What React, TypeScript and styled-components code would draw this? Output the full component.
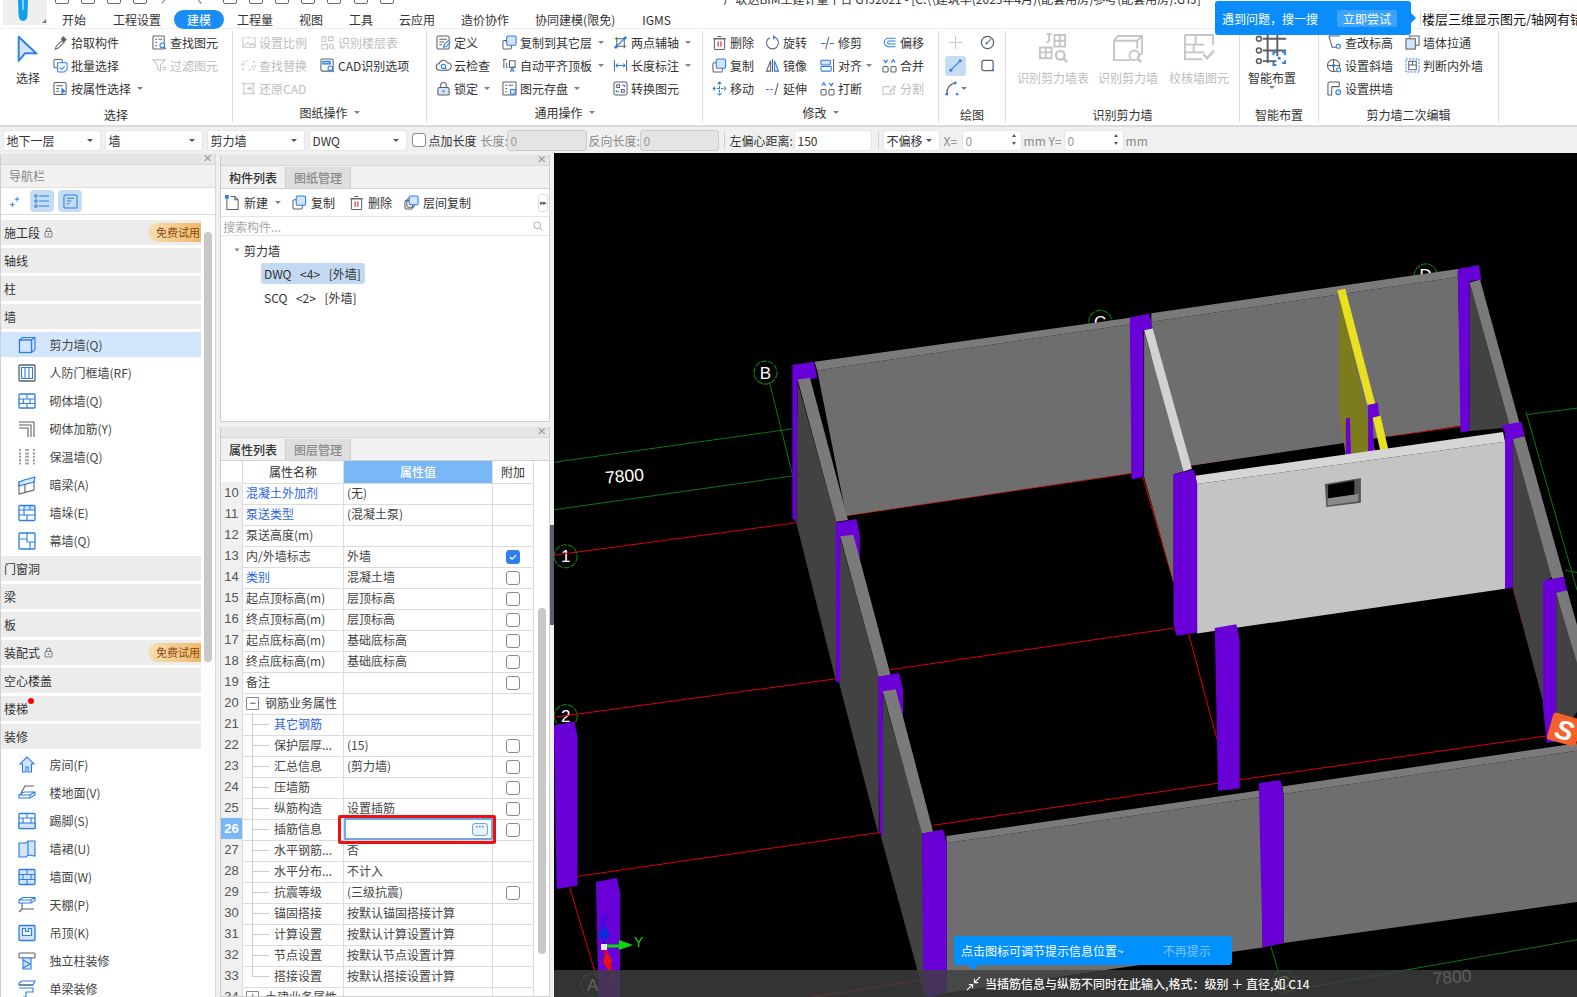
import React from 'react';
import styled, { createGlobalStyle } from 'styled-components';

const B = '#2b7de9';
const D = '#5a5f68';
const G = '#c6c6c6';
const F = '#d2e3fa';

const Global = createGlobalStyle`
  html, body { margin: 0; padding: 0; background: #f0f0f0; overflow: hidden; }
  * { box-sizing: border-box; }
  body { font-family: "Noto Sans CJK SC", "Liberation Sans", sans-serif; font-size: 12px; color: #333; }
`;

const Page = styled.div`
  width: 1577px; height: 997px; position: relative; overflow: hidden;
  display: flex; flex-direction: column; background: #f0f0f0;
`;

/* ---------- header ---------- */
const Header = styled.header`
  height: 29px; display: flex; background: #fff; flex: none; border-bottom: 1px solid #f0f0f0;
`;
const LogoBox = styled.div`
  width: 44px; height: 25px; margin-left: 3px; background: #efefef; position: relative; overflow: hidden; flex: none;
`;
const HeaderMain = styled.div`flex: 1; display: flex; flex-direction: column; min-width: 0;`;
const QuickRow = styled.div`
  height: 10px; overflow: hidden; display: flex; align-items: flex-start; flex: none;
`;
const QuickIcon = styled.span<{ $ml: number }>`
  display: block; flex: none; width: 14px; height: 14px; margin-top: -10px; margin-left: ${p => p.$ml}px;
  border: 1.2px solid #6a6a6a; border-radius: 2px;
`;
const QuickSlash = styled.span<{ $ml: number; $rot: number }>`
  display: block; flex: none; width: 1.2px; height: 12px; margin-top: -7px; margin-left: ${p => p.$ml}px;
  background: #777; transform: rotate(${p => p.$rot}deg);
`;
const TitleText = styled.span`
  margin-left: 329px; margin-top: -8px; line-height: 13px; white-space: nowrap; color: #333; flex: none; font-size: 12px;
`;
const TabBar = styled.nav`height: 19px; display: flex; align-items: center; flex: none;`;
const Tab = styled.span<{ $ml: number; $active?: boolean }>`
  margin-left: ${p => p.$ml}px; height: 19px; line-height: 19px; flex: none; white-space: nowrap;
  ${p => p.$active && `background:#1a8df5;color:#fff;border-radius:10px;width:50px;text-align:center;`}
`;

const HelpTip = styled.div`
  position: absolute; left: 1215px; top: 1px; width: 196px; height: 34px; background: #0a8dfb; border-radius: 3px; color: #fff;
  display: flex; align-items: center; padding-left: 7px; z-index: 5;
  &::after { content: ''; position: absolute; right: -5px; top: 12px; border-left: 5px solid #0a8dfb; border-top: 5px solid transparent; border-bottom: 5px solid transparent; }
`;
const HelpBtn = styled.span`
  margin-left: 19px; width: 60px; height: 17px; line-height: 17px; text-align: center; background: rgba(255,255,255,.2); border-radius: 2px;
`;
const TopSearch = styled.div`
  position: absolute; left: 1420px; top: 10px; width: 170px; height: 16px; line-height: 16px; padding-left: 1px;
  background: #fff; white-space: nowrap; overflow: hidden; color: #111; font-size: 13px; border-left: 1px solid #ddd; border-top: 1px solid #eee; z-index: 5;
`;

/* ---------- ribbon ---------- */
const Ribbon = styled.div`
  height: 98px; background: #fff; display: flex; flex: none; border-bottom: 2px solid #dcdcdc;
`;
const Group = styled.section<{ $w: number }>`
  width: ${p => p.$w}px; height: 91px; margin-top: 2px; flex: none; display: flex; flex-direction: column;
  border-right: 1px solid #dedede;
`;
const GroupBody = styled.div<{ $pl?: number }>`height: 72px; display: flex; padding-left: ${p => p.$pl || 0}px; flex: none;`;
const GroupLabel = styled.div<{ $plain?: boolean }>`
  height: 19px; line-height: 17px; display: flex; justify-content: center; align-items: center; gap: 6px;
  padding-top: ${p => (p.$plain ? 4 : 0)}px;
`;
const Caret = styled.i<{ $ml?: number; $c?: string }>`
  display: inline-block; flex: none; margin-left: ${p => p.$ml ?? 4}px; width: 0; height: 0; border-left: 3px solid transparent; border-right: 3px solid transparent; border-top: 3.5px solid ${p => p.$c || '#808080'};
`;
const ToolGrid = styled.div<{ $cols: string }>`
  display: grid; grid-template-columns: ${p => p.$cols}; grid-auto-rows: 23px; align-items: center;
`;
const Tool = styled.div<{ $off?: boolean }>`
  display: flex; align-items: center; white-space: nowrap; color: ${p => (p.$off ? '#bdbdbd' : '#333')};
`;
const ToolIcon = styled.span`width: 18px; flex: none; display: flex; align-items: center;`;
const BigTool = styled.div<{ $w: number; $off?: boolean; $pl?: number }>`
  width: ${p => p.$w}px; flex: none; display: flex; flex-direction: column; align-items: center; padding-top: 2px; padding-left: ${p => p.$pl || 0}px;
  white-space: nowrap; color: ${p => (p.$off ? '#bdbdbd' : '#333')};
`;
const BigIcon = styled.span`height: 32px; display: flex; align-items: flex-start; justify-content: center;`;
const BigLabel = styled.span`margin-top: 5px; line-height: 16px;`;
const DrawCell = styled.div<{ $on?: boolean }>`
  width: 21px; height: 20px; margin: 0 auto; display: flex; align-items: center; justify-content: center; border-radius: 3px; position: relative;
  background: ${p => (p.$on ? '#c5dcf3' : 'transparent')};
`;
const IconSvg = styled.svg<{ $s: number }>`
  width: ${p => p.$s}px; height: ${p => p.$s}px; display: block; flex: none; overflow: visible; fill: none; stroke-width: 1.1;
`;

/* ---------- option bar ---------- */
const OptionBar = styled.div`
  height: 26px; display: flex; align-items: center; flex: none; padding-left: 2.5px; background: #f0f0f0;
`;
const Select = styled.div<{ $w: number; $ml?: number }>`
  width: ${p => p.$w}px; height: 21px; margin-left: ${p => p.$ml || 0}px; background: #fff; border: 1px solid #e6e6e6; border-radius: 3px; flex: none;
  display: flex; align-items: center; justify-content: space-between; padding: 0 7px 0 3px; font-size: 12px;
`;
const OptCheck = styled.span`
  width: 14px; height: 14px; background: #fff; border: 1px solid #8a8a8a; border-radius: 3px; margin-left: 4.5px; margin-right: 3px; flex: none;
`;
const OptText = styled.span<{ $ml?: number; $w?: number; $grey?: boolean }>`
  margin-left: ${p => p.$ml || 0}px; ${p => p.$w && `width:${p.$w}px;`} flex: none; white-space: nowrap; color: ${p => (p.$grey ? '#8a8a8a' : '#333')};
`;
const OptInput = styled.div<{ $w: number; $off?: boolean; $ml?: number }>`
  width: ${p => p.$w}px; height: 21px; margin-left: ${p => p.$ml || 0}px; flex: none; padding-left: 3px; line-height: 19px; border-radius: 3px;
  border: 1px solid ${p => (p.$off ? '#ccc' : '#e6e6e6')}; background: ${p => (p.$off ? '#e4e4e4' : '#fff')}; color: ${p => (p.$off ? '#999' : '#333')};
  position: relative;
`;
const SpinValue = styled.span`color: #999;`;
const Spin = styled.span`
  position: absolute; right: 5px; top: 3px; display: flex; flex-direction: column; gap: 5px;
  i { display: block; width: 0; height: 0; border-left: 2.5px solid transparent; border-right: 2.5px solid transparent; }
  i:first-child { border-bottom: 3px solid #555; }
  i:last-child { border-top: 3px solid #555; }
`;
const OptSep = styled.span<{ $ml: number }>`width: 1px; height: 17px; background: #d0d0d0; margin-left: ${p => p.$ml}px; flex: none;`;

/* ---------- main ---------- */
const Main = styled.main`flex: 1; display: flex; min-height: 0; overflow: hidden;`;
const NavPanel = styled.aside`
  width: 216px; margin-top: 1px; flex: none; background: #fff; border-left: 1px solid #cfcfcf; border-right: 1px solid #d8d8d8; position: relative; overflow: hidden;
  display: flex; flex-direction: column;
`;
const PanelClose = styled.div`
  height: 11px; background: #e6e6e6; border-bottom: 1px solid #d8d8d8; flex: none; position: relative;
  &::after { content: '×'; position: absolute; right: 3px; top: -4px; font: 15px/15px "Liberation Sans", sans-serif; color: #999; }
`;
const NavTitle = styled.div`height: 23px; background: #f1f1f1; border-bottom: 1px solid #ddd; line-height: 22px; padding-left: 8px; color: #888; flex: none;`;
const NavTools = styled.div`height: 27px; border-bottom: 1px solid #ddd; display: flex; align-items: center; flex: none; padding-left: 8px;`;
const NavToolBtn = styled.span<{ $ml: number; $on?: boolean }>`
  margin-left: ${p => p.$ml}px; width: ${p => (p.$on ? 24 : 12)}px; height: 22px; border-radius: 4px; display: flex; align-items: center; justify-content: center;
  background: ${p => (p.$on ? '#c5dcf3' : 'transparent')};
`;
const NavList = styled.div`padding-top: 5px; width: 200px; flex: none;`;
const NavHead = styled.div`
  height: 25px; margin-bottom: 3px; background: #ececec; display: flex; align-items: center; gap: 3px; padding-left: 3px; position: relative;
`;
const FreeBadge = styled.span`
  position: absolute; right: 0; top: 3px; width: 53px; height: 19px; line-height: 19px; padding-left: 8px; border-radius: 10px 0 0 10px;
  background: linear-gradient(90deg, #f6dfb5, #efb868); color: #8a4c12; font-size: 11px; white-space: nowrap; overflow: hidden;
`;
const RedDot = styled.span`
  position: absolute; left: 27px; top: 2px; width: 6px; height: 6px; border-radius: 50%; background: #f00;
`;
const NavItem = styled.div<{ $on?: boolean }>`
  height: 25px; margin-bottom: 3px; display: flex; align-items: center; padding-left: 16.5px; gap: 14px; color: #444;
  background: ${p => (p.$on ? '#d2e6fd' : 'transparent')};
`;
const NavScroll = styled.div`
  position: absolute; left: 203px; top: 78px; width: 8px; height: 430px; border-radius: 4px; background: #c8c8c8;
`;

const MidCol = styled.div`
  width: 330px; margin-left: 4px; padding-top: 2px; flex: none; display: flex; flex-direction: column; gap: 5px; overflow: hidden;
`;
const Panel = styled.section<{ $h?: number }>`
  ${p => (p.$h ? `height:${p.$h}px;` : 'flex:1;')} background: #fff; border-left: 1px solid #cfcfcf; border-right: 1px solid #cfcfcf; border-bottom: 1px solid #cfcfcf; position: relative; overflow: hidden; flex-shrink: 0;
`;
const TabRow = styled.div`height: 23px; display: flex; background: #f1f1f1; border-bottom: 1px solid #cfcfcf;`;
const PanelTab = styled.span<{ $on?: boolean }>`
  width: 65px; text-align: center; line-height: 21px; font-weight: 500; border-right: 1px solid #cfcfcf; margin-top: 1px;
  background: ${p => (p.$on ? '#f1f1f1' : '#dedede')}; color: ${p => (p.$on ? '#333' : '#8a8a8a')};
`;
const CompBar = styled.div`height: 28px; display: flex; align-items: center; border-bottom: 1px solid #e4e4e4; padding-left: 4px; position: relative;`;
const CompTool = styled.span<{ $w: number }>`width: ${p => p.$w}px; display: flex; align-items: center; gap: 4px; flex: none;`;
const MoreBtn = styled.span`
  position: absolute; right: 1px; top: 5px; width: 10px; height: 18px; border: 1px solid #e0e0e0; border-radius: 2px; font: 7px/16px "Liberation Sans", sans-serif; color: #555; text-align: center; letter-spacing: -1px;
`;
const SearchRow = styled.div`
  height: 19px; border-bottom: 1px solid #e4e4e4; display: flex; align-items: center; justify-content: space-between; color: #a8a8a8; padding: 0 5px 0 2px;
`;
const Tree = styled.div`padding-top: 4px;`;
const TreeHead = styled.div`height: 20px; display: flex; align-items: center; padding-left: 12px; gap: 3px;`;
const TreeLeaf = styled.div<{ $on?: boolean }>`
  margin: 3px 0 0 40px; width: fit-content; height: 21px; line-height: 21px; padding: 0 4px 0 3px; border-radius: 3px; white-space: pre; word-spacing: 1.6px;
  background: ${p => (p.$on ? '#c2d9f1' : 'transparent')};
  &:first-of-type { margin-top: 4px; }
`;

const HeadRow = styled.div`display: grid; grid-template-columns: 22px 101px 149px 41px; height: 21px; text-align: center; line-height: 22px;`;
const HeadCell = styled.div<{ $on?: boolean }>`
  border-right: 1px solid #dcdcdc; border-bottom: 1px solid #dcdcdc;
  ${p => p.$on && 'background:#7ab7f7;color:#fff;font-weight:500;'}
`;
const Row = styled.div`display: grid; grid-template-columns: 22px 101px 149px 41px; height: 21px;`;
const NumCell = styled.div<{ $on?: boolean }>`
  border-right: 1px solid #dcdcdc; border-bottom: 1px solid #dcdcdc; text-align: center;
  font: ${p => (p.$on ? 700 : 400)} 13px/21px "Liberation Sans", sans-serif;
  background: ${p => (p.$on ? '#7ab7f7' : '#f0f0f0')}; color: ${p => (p.$on ? '#fff' : '#555')};
`;
const NameCell = styled.div<{ $blue?: boolean; $tree?: boolean; $end?: boolean; $group?: boolean }>`
  border-right: 1px solid #dcdcdc; border-bottom: 1px solid #dcdcdc; line-height: 22px; white-space: nowrap; position: relative;
  padding-left: ${p => (p.$tree ? 31 : 3)}px; color: ${p => (p.$blue ? '#2a62e8' : '#444')};
  ${p => p.$group && 'display:flex;align-items:center;gap:6px;'}
  ${p => p.$tree && `
    &::before { content:''; position:absolute; left:9px; top:0; width:1px; height:${p.$end ? '50%' : '100%'}; background:#ccc; }
    &::after { content:''; position:absolute; left:9px; top:50%; width:17px; height:1px; background:#ccc; }
  `}
`;
const TreeBox = styled.span`
  width: 13px; height: 13px; border: 1px solid #888; border-radius: 1px; font: 12px/10px "Liberation Sans", sans-serif; text-align: center; color: #555; flex: none; background: #fff;
`;
const ValCell = styled.div`
  border-right: 1px solid #dcdcdc; border-bottom: 1px solid #dcdcdc; line-height: 22px; padding-left: 3px; white-space: nowrap; position: relative; color: #444;
`;
const AddCell = styled.div`
  border-right: 1px solid #dcdcdc; border-bottom: 1px solid #dcdcdc; display: flex; align-items: center; justify-content: center; padding-top: 1px;
`;
const Check = styled.span<{ $on?: boolean }>`
  width: 14px; height: 14px; border-radius: 3px; border: 1px solid ${p => (p.$on ? '#2f7fe8' : '#888')}; background: ${p => (p.$on ? '#2f7fe8' : '#fff')};
  display: flex; align-items: center; justify-content: center;
`;
const EditBox = styled.div`
  position: absolute; inset: 0 -1px 0 0; border: 2px solid #6aa8e8; background: #fff; display: flex; justify-content: flex-end; align-items: center; padding-right: 3px;
`;
const EditBtn = styled.span`
  width: 16px; height: 13px; border: 1px solid #6aa8e8; border-radius: 3px; background: #eaf3fd; color: #2b7de9; font: 700 9px/7px "Liberation Sans", sans-serif; text-align: center;
`;
const RedFrame = styled.div`
  position: absolute; left: -6px; top: -3px; right: -4px; bottom: -4px; border: 3px solid #f00e0e; border-radius: 2px; z-index: 3;
`;
const PropScroll = styled.div`
  position: absolute; left: 317px; top: 181px; width: 8px; height: 346px; border-radius: 4px; background: #c8c8c8;
`;

const Splitter = styled.div`
  width: 4px; flex: none; position: relative; background: #f0f0f0;
  &::after { content: ''; position: absolute; left: 0; top: 372px; width: 4px; height: 100px; background: #59626c; }
`;
const Canvas = styled.div`flex: 1; background: #000; position: relative; overflow: hidden;`;
const CanvasSvg = styled.svg`position: absolute; left: 0; top: 0; width: 100%; height: 100%;`;
const StatusBar = styled.div`
  position: absolute; left: 0; right: 0; top: 817px; height: 27px; background: rgba(62,62,62,.82); display: flex; align-items: center; padding-left: 412px; color: #f4f4f4; font-weight: 500; gap: 4px;
`;
const HintTip = styled.div`
  position: absolute; left: 400px; top: 783px; width: 278px; height: 29px; background: #0090ff; border-radius: 3px; color: #fff; display: flex; align-items: center; padding-left: 7px;
  &::after { content: ''; position: absolute; left: 14px; bottom: -5px; border-top: 5px solid #0090ff; border-left: 5px solid transparent; border-right: 5px solid transparent; }
`;
const HintDim = styled.span`margin-left: 39px; color: rgba(255,255,255,.5);`;

/* ---------- icons ---------- */
const icons: Record<string, React.ReactNode> = {
  pick: <><path d="M2.5 15l1-3 6-6 2 2-6 6z" stroke={D} /><path d="M8.5 4l4 4M11 2l3 3-2 1.5L9.5 4z" stroke={D} fill={D} /></>,
  batch: <><rect x="1" y="1.5" width="9" height="9" rx="1.5" stroke={D} /><path d="M5 5h9a1 1 0 011 1v6l-3 3H6a1 1 0 01-1-1z" stroke={B} fill="#fff" /><path d="M7.5 10l2 2 3-3" stroke={B} /></>,
  attr: <><rect x="1" y="1.5" width="13" height="13" rx="1.5" stroke={D} /><path d="M3.5 5h7M3.5 8h3M3.5 11h3" stroke={D} /><path d="M9 7v7l4.5-3.2z" fill={B} /></>,
  find: <><rect x="1" y="1" width="12" height="14" rx="1" stroke={D} /><path d="M3.5 4.5h2M7 4.5h4M3.5 8h2M3.5 11.5h2" stroke={D} /><circle cx="11" cy="11" r="2.5" stroke={B} fill="#fff" /><path d="M13 13l2 2" stroke={B} /></>,
  filter: <><path d="M1 2h13l-5 6v6l-3-2V8z" stroke={G} /><path d="M11 10h4M11 12.5h4" stroke={G} /></>,
  scale: <><path d="M2 3v10h13V3M2 3h2M13 3h2M6 3h5" stroke={G} /><path d="M3 12l4-4 3 3 2-2 3 3" stroke={G} /></>,
  floor: <><path d="M2 2h4v5H2zM9 2h5v4H9zM2 10h6v5H2z" stroke={G} /><circle cx="12" cy="12" r="2.2" stroke={G} /><path d="M14 14l1.5 1.5" stroke={G} /></>,
  swap: <path d="M3 8a5.5 5.5 0 015-5M13 8a5.5 5.5 0 01-5 5M3 13a7 7 0 010-10M13 3a7 7 0 010 10" stroke={G} strokeDasharray="3 1.5" />,
  cad: <><rect x="1" y="1" width="13" height="13" rx="1.5" stroke={D} /><rect x="2.5" y="3" width="9" height="4" fill={B} /><path d="M4 5h6" stroke="#fff" strokeWidth=".9" /><circle cx="11" cy="11" r="2.5" stroke={B} fill="#fff" /><path d="M13 13l2 2" stroke={B} /></>,
  restore: <><path d="M3 1v14M13 1v14M1 3h14M1 13h14" stroke={G} /><path d="M11 6L7 8l4 2M7 8h5" stroke={G} /></>,
  define: <><rect x="1" y="1" width="13" height="14" rx="1.5" stroke={D} /><path d="M3.5 4.5h8M3.5 7.5h5M3.5 10.5h3" stroke={D} /><path d="M8 13l1-3 4-4 2 2-4 4z" stroke={B} fill="#fff" /></>,
  cloud: <><path d="M4 13a3.5 3.5 0 01-.5-7A4.5 4.5 0 0112 5a4 4 0 01.5 8z" stroke={D} /><circle cx="8" cy="9" r="2.3" stroke={B} /><path d="M9.8 10.8l1.4 1.4" stroke={B} /></>,
  lock: <><rect x="2" y="7" width="12" height="8" rx="1.5" stroke={D} fill={F} /><path d="M5 7V4.5a3 3 0 016 0V7" stroke={D} /><circle cx="8" cy="11" r="1.2" fill={B} /></>,
  copyTo: <><rect x="1" y="6" width="9" height="9" rx="1.5" stroke={D} /><rect x="5" y="1" width="10" height="10" rx="1.5" stroke={B} fill={F} /></>,
  flatTop: <><path d="M2 2v9M5 5v6" stroke={D} /><path d="M1 1.5h4M8 3h6v7H8z" stroke={D} /><path d="M9 15l2-5 2 5M9.8 13.5h2.4" stroke={B} /></>,
  store: <><rect x="1" y="1" width="14" height="14" rx="1" stroke={D} /><path d="M3.5 4.5h2M7 4.5h5M3.5 8h2M3.5 11.5h2" stroke={D} /><rect x="9" y="9" width="5" height="5" fill={F} stroke={B} /></>,
  axis2: <><path d="M2 4h12M12 2v12M4 2v12M2 12h12" stroke={D} /><path d="M2 14L14 2" stroke={B} strokeWidth="1.5" /><circle cx="3" cy="13" r="1.5" fill={B} /><circle cx="13" cy="3" r="1.5" fill={B} /></>,
  dim: <><path d="M1.5 2v12M14.5 2v12" stroke={D} /><path d="M3 8h10M3 8l2-2M3 8l2 2M13 8l-2-2M13 8l-2 2" stroke={B} /></>,
  convert: <><rect x="1" y="1" width="14" height="14" rx="2" stroke={D} /><path d="M4 4h3v3H4zM9 9h3v3H9z" stroke={D} /><path d="M9.5 4.5h3v2M6.5 11.5h-3v-2" stroke={B} /></>,
  del: <><rect x="2.5" y="4" width="11" height="11.5" rx="1.5" stroke={D} /><path d="M6 1.5h4M1 4h14" stroke={D} /><path d="M6.5 7v5.5M9.5 7v5.5" stroke="#e02020" strokeWidth="1.2" /></>,
  rotate: <><circle cx="8" cy="8.5" r="6.3" stroke={D} strokeDasharray="26 4" /><path d="M8.5 0l3 2.5-3 2.5z" fill={B} /></>,
  trim: <><path d="M1 9h5M10 9h5" stroke={B} /><path d="M9.5 2L6 15" stroke={D} /><path d="M12 9h3" stroke={B} strokeDasharray="1.5 1.5" /></>,
  offset: <path d="M14.5 3.5H7a4.5 4.5 0 000 9h7.5M14.5 6.5H7.5a1.5 1.5 0 000 3h7" stroke={B} />,
  copy: <><rect x="1" y="5" width="10" height="10" rx="1.5" stroke={D} /><rect x="4.5" y="1" width="10" height="10" rx="1.5" stroke={B} fill={F} /></>,
  mirror: <><path d="M8 1v14" stroke={D} /><path d="M6 3L1.5 14H6z" stroke={D} /><path d="M10 3l4.5 11H10z" stroke={B} fill={F} /></>,
  align: <><path d="M14.5 1v14" stroke={D} /><rect x="1" y="2.5" width="10" height="5" rx="1" stroke={B} fill={F} /><rect x="1" y="9" width="11" height="5" rx="1" stroke={B} /></>,
  merge: <><rect x="1" y="9" width="5.5" height="6" rx="1.5" stroke={D} /><rect x="9.5" y="9" width="5.5" height="6" rx="1.5" stroke={D} /><path d="M2 2l2 3 2-3M10 5l2-3 2 3" stroke={B} strokeWidth="1.3" /></>,
  move: <path d="M8 1v14M1 8h14M8 1L6 3M8 1l2 2M8 15l-2-2M8 15l2-2M1 8l2-2M1 8l2 2M15 8l-2-2M15 8l-2 2" stroke={B} strokeDasharray="3 1.2" />,
  extend: <><path d="M1 9h9" stroke={B} strokeDasharray="3 1.5" /><path d="M14 2l-3.5 13" stroke={D} /></>,
  breakI: <><rect x="1" y="9" width="5.5" height="6" rx="1.5" stroke={D} /><rect x="9.5" y="9" width="5.5" height="6" rx="1.5" stroke={D} /><path d="M2 5l2-3 2 3M10 2l2 3 2-3" stroke={B} strokeWidth="1.3" /></>,
  split: <><path d="M13 8v6H1V6h8" stroke={G} /><path d="M8 11l5-6 1.5 1.5L9 12z" stroke={G} /></>,
  dot: <><path d="M1 8h5M10 8h5M8 1v5M8 10v5" stroke={G} /><circle cx="8" cy="8" r="1.3" fill={G} /></>,
  gauge: <><circle cx="8" cy="8" r="6.5" stroke={D} strokeWidth="1.3" /><path d="M7 9l5-5" stroke={D} /><circle cx="7" cy="9" r="1.2" fill={B} /></>,
  line: <><path d="M3 13L13 3" stroke={B} strokeWidth="1.3" /><circle cx="3" cy="13" r="1.6" fill={B} /><circle cx="13" cy="3" r="1.6" fill={B} /></>,
  rect: <><rect x="2" y="2.5" width="12" height="11" rx="2" stroke={D} strokeWidth="1.3" /><circle cx="13.5" cy="13" r="1.3" fill={B} /></>,
  arc: <><path d="M3 14C3 7 7 3 12 2" stroke={D} strokeWidth="1.3" /><circle cx="3" cy="14" r="1.5" fill={B} /><circle cx="12" cy="2" r="1.5" fill={B} /><circle cx="14" cy="14" r="1.3" fill={B} /></>,
  slope: <><path d="M2 1h7l5 0" stroke={D} /><path d="M2 1l3.5 12h7l1.5-3" stroke={D} /><circle cx="12" cy="12" r="2.2" stroke={B} fill="#fff" /></>,
  pull: <><rect x="1" y="4" width="10" height="11" stroke={D} fill={F} /><path d="M4 1h11v10h-4" stroke={D} /><path d="M5 4V1" stroke={D} /></>,
  oblique: <><circle cx="7" cy="8" r="6.5" stroke={D} /><path d="M7 1.5v13M.5 8h13" stroke={D} /><circle cx="7" cy="8" r="1.6" fill={B} /><circle cx="12.5" cy="12.5" r="2.2" stroke={B} fill="#fff" /></>,
  inout: <><path d="M1 1h14v14H1z" stroke={B} strokeDasharray="2 1.5" /><path d="M4 3.5h8v9H4zM8 3.5v4M4 7.5h8" stroke={D} /></>,
  archW: <><path d="M1 15V3a2 2 0 012-2h10v5M1 15h4V7a1 1 0 011-1h7" stroke={D} /><circle cx="12" cy="12" r="2.6" fill={F} stroke={B} /></>,
  sparkle: <path d="M9 1v6M6 4h6M3 8v6M0 11h6" stroke={B} strokeWidth="1.2" />,
  listI: <><circle cx="2" cy="3" r="1.2" stroke={B} /><circle cx="2" cy="8" r="1.2" stroke={B} /><circle cx="2" cy="13" r="1.2" stroke={B} /><path d="M5 3h10M5 8h10M5 13h10" stroke={B} /></>,
  docI: <><rect x="1" y="1" width="14" height="14" rx="1.5" stroke={B} /><path d="M4 4.5h8M4 7.5h5M4 10.5h3" stroke={B} /></>,
  padlock: <><rect x="3" y="6.5" width="10" height="8" rx="1" stroke="#555" /><path d="M5 6.5V4.5a3 3 0 016 0v2" stroke="#555" /><circle cx="8" cy="10.5" r="1.1" fill="#555" /></>,
  nShear: <><path d="M1.5 4L4.5 1.5H17V13.5L13.5 16.5V4z" fill={F} stroke={B} /><rect x="1.5" y="4" width="12" height="12.5" stroke={B} strokeWidth="1.3" fill="#d2e6fd" /><path d="M13.5 4L17 1.5" stroke={B} /></>,
  nDefense: <><rect x="1" y="1" width="16" height="16" rx="1" stroke={D} strokeWidth="1.3" /><path d="M3.5 3.5h11v11h-11zM7 3.5v11M11 3.5v11" stroke={B} /></>,
  nBrick: <><rect x="1" y="2" width="16" height="14" rx="1" stroke={B} strokeWidth="1.3" /><path d="M1 7h16M1 11.5h16M9 2v5M5.5 7v4.5M12 7v4.5M9 11.5v4.5" stroke={B} /></>,
  nRebar: <path d="M1 2h15v15M1 5h12v12M1 8h9v9" stroke={D} />,
  nInsul: <path d="M2 1v16M8 1v16M10 1v16M16 1v16M2 5h1M2 9h1M2 13h1M15 5h1M15 9h1M15 13h1" stroke={D} strokeDasharray="2 1.4" />,
  nBeam: <><path d="M1 6l15-4v12L1 18z" stroke={D} /><path d="M1 6l5-2 11-3-1 5-15 4z" stroke={B} fill={F} /><path d="M7 8v9" stroke={D} /></>,
  nPier: <><rect x="6" y="1.5" width="11" height="4.5" fill={F} /><rect x="1" y="1.5" width="16" height="15" rx="1" stroke={B} strokeWidth="1.3" /><path d="M1 6h16M1 11h16M6 1.5V11M12 1.5V6M9 11v5.5" stroke={B} /></>,
  nCurtain: <><rect x="1" y="1" width="16" height="16" rx="1" stroke={B} strokeWidth="1.3" /><path d="M9 1v9M1 7h8M9 10h8M12 10v7" stroke={B} /></>,
  nRoom: <><path d="M9 1L2 8h2.5v8H8v-5h2v5h3.5V8H16z" stroke={B} fill={F} /></>,
  nFloor: <><path d="M1 11l5-3h11v3l-5 3H1zM1 11h11v3M12 11l5-3" stroke={B} /><path d="M3 9l4-7h9" stroke={D} /></>,
  nSkirt: <><rect x="1" y="1.5" width="16" height="15" rx="1" stroke={B} strokeWidth="1.3" /><path d="M1 6h16M9 1.5V6M5 6v5M13 6v5" stroke={B} /><rect x="1" y="11" width="16" height="5.5" fill={F} stroke={B} /></>,
  nDado: <path d="M1 3l7 0 2-2 7 0v15l-7-1-2 2H1zM10 1v14" stroke={B} fill={F} />,
  nWall: <><rect x="1" y="1.5" width="16" height="15" rx="1" stroke={B} strokeWidth="1.3" fill={F} /><path d="M1 6.5h16M1 11.5h16M9 1.5v5M5 6.5v5M13 6.5v5M9 11.5v5" stroke={B} /></>,
  nCeil: <><path d="M1 4l4-2.5h12v3l-4 2.5H1zM1 4h12v3M13 4l4-2.5" stroke={B} /><path d="M4 7v6H16M4 13l-3 3" stroke={D} /></>,
  nDrop: <><rect x="1" y="1.5" width="16" height="15" rx="1" stroke={B} strokeWidth="1.3" fill={F} /><path d="M4.5 4.5v7h9v-7h-3v3h-3v-3z" stroke={B} fill="#fff" /></>,
  nCol: <><rect x="1" y="1" width="16" height="5" rx="1" stroke={D} /><path d="M5 6h8v11H5zM5 8l7 4-7 4" stroke={B} fill={F} /></>,
  nBeamFin: <><path d="M1 3l3-2h13l-2 4H1zM1 8h14v4H8v5H5" stroke={B} /><path d="M1 5h14" stroke={D} /></>,
  newI: <><path d="M2 4v11.5h12V5l-3.5-3.5H6" stroke={D} /><path d="M10.5 1.5V5H14" stroke={D} /><rect x="0" y="0" width="4" height="4" fill={B} /></>,
  layerCopy: <><rect x="1" y="6" width="8" height="9" rx="1.5" stroke={D} /><rect x="3" y="4" width="8" height="9" rx="1.5" stroke={D} /><rect x="5.5" y="1" width="9.5" height="9.5" rx="1.5" stroke={B} fill={F} /></>,
  search: <><circle cx="7" cy="7" r="4.5" stroke="#aaa" strokeWidth="1.3" /><path d="M10.5 10.5l3 3" stroke="#aaa" strokeWidth="1.3" /></>,
  tick: <path d="M3 8l3.5 3.5L13 5" stroke="#fff" strokeWidth="2" />,
  tri: <path d="M3 5h10L8 11z" fill="#808080" />,
  shrink: <path d="M15 1L9 7M9 3v4h4M1 15l6-6M7 13V9H3" stroke="#fff" strokeWidth="1.2" />,
  bTable: <><path d="M9 1h5M11.5 1v7a2 2 0 01-3 1M17 2h11v12H17zM17 8h11M22.5 2v12M2 15h12v11H2zM2 20h12M8 15v11" stroke={G} strokeWidth="2" /><circle cx="23" cy="23" r="4.5" stroke={G} strokeWidth="2.4" /><path d="M26 26l4 4" stroke={G} strokeWidth="2.6" /></>,
  bWall: <><path d="M1 8l4-5h25v18l-5 4M1 8v20h17M1 8h24v8M25 8l5-5" stroke={G} strokeWidth="2" /><circle cx="22" cy="23" r="5" stroke={G} strokeWidth="2" /><path d="M26 27l3 3" stroke={G} strokeWidth="2.6" /></>,
  bCheck: <><path d="M1 2h29v10M1 2v25h18M1 12h20M12 2v10M1 20h20M10 12v8" stroke={G} strokeWidth="2" /><path d="M20 22l4 4 7-8" stroke={G} strokeWidth="2.4" /></>,
  bSmart: <><path d="M7 6h24M7 18h24M7 29h14M12 0v31M22 0v24" stroke={D} strokeWidth="2" /><circle cx="3" cy="6" r="2.5" stroke={D} strokeWidth="1.6" fill="#fff" /><circle cx="3" cy="18" r="2.5" stroke={D} strokeWidth="1.6" fill="#fff" /><circle cx="3" cy="29" r="2.5" stroke={D} strokeWidth="1.6" fill="#fff" /><path d="M18 23v-3h3M27 20h3v3M30 28v3h-3M21 33h-3v-3" stroke={B} strokeWidth="2" /><circle cx="24" cy="26" r="1.5" fill={B} /></>,
  pointer: <path d="M5 4l19 18-12-.5L5 30z" stroke={B} strokeWidth="2" fill={F} strokeLinejoin="round" />,
};

const Ic = ({ n, s = 16, vb = 16 }: { n: string; s?: number; vb?: number }) => (
  <IconSvg $s={s} viewBox={`0 0 ${vb} ${vb}`}>{icons[n]}</IconSvg>
);

const T = ({ n, label, off, caret }: { n: string; label: string; off?: boolean; caret?: boolean }) => (
  <Tool $off={off}>
    <ToolIcon><Ic n={n} s={15} /></ToolIcon>
    {label}
    {caret && <Caret $ml={6} />}
  </Tool>
);

/* ---------- canvas data (coordinates measured on a 1568x1568 stretched crop) ---------- */
const pts = (s: string) =>
  s.trim().split(/\s+/).map(p => {
    const [x, y] = p.split(',').map(Number);
    return `${(x / 1.5267 - 4).toFixed(1)},${(y / 1.851 - 3).toFixed(1)}`;
  }).join(' ');

const RED = '#e00000';
const GRN = '#0a7a0a';
const PUR = '#6a00d8';
const W = '#6e6e6e';
const WT = '#7a7a7a';
const WD = '#424242';

const lines: [string, string][] = [
  [GRN, '6,578 370,516'], [GRN, '6,666 372,603'], [GRN, '335,430 372,610'],
  [RED, '6,750 376,690'], [RED, '6,1050 441,978'], [RED, '520,962 952,885'],
  [RED, '40,1345 505,1263'], [RED, '585,1250 1020,1172'], [RED, '1040,1168 1530,1083'],
  [RED, '452,677 890,598'], [RED, '980,583 1215,540'], [RED, '1280,530 1390,512'],
  [RED, '905,605 952,800'], [RED, '975,895 1018,1090'], [RED, '1470,810 1520,1030'], [RED, '30,1365 72,1535'],
  [GRN, '1490,490 1568,478'], [GRN, '1490,485 1568,815'], [GRN, '1550,778 1568,782'],
  [GRN, '1120,1558 1568,1462'], [GRN, '1100,1472 1118,1545'], [RED, '400,1568 575,1535'],
];

const polys: [string, string][] = [
  /* back walls */
  [W, '408,408 888,322 888,598 452,677'],
  [WT, '404,392 888,310 888,322 408,408'],
  [W, '918,318 1386,235 1392,510 975,585 918,460'],
  [WT, '918,302 1386,220 1386,235 918,318'],
  /* left side walls: dark face, column, then top strip */
  [WD, '378,430 437,688 437,985 376,690'],
  [PUR, '370,398 403,392 408,422 378,428 376,690 370,680'],
  [WT, '378,425 397,422 455,685 437,688'],
  [WD, '443,718 502,975 502,1270 441,985'],
  [PUR, '436,690 468,683 473,712 473,775 443,718 443,985 437,985'],
  [WT, '443,715 463,712 520,972 502,975'],
  [WD, '508,1005 568,1262 572,1568 505,1270'],
  [PUR, '501,975 533,968 539,998 539,1060 508,1005 508,1270 503,1262'],
  [WT, '508,1002 528,998 585,1262 568,1265'],
  /* inner wall */
  [W, '907,335 967,595 952,600 952,800 907,605'],
  ['#d2d2d2', '907,333 920,330 980,590 967,595'],
  /* yellow */
  ['#7c7c1c', '1205,262 1260,560 1215,568 1205,480'],
  ['#e8e020', '1202,260 1214,257 1260,470 1248,472'],
  ['#e8e020', '1256,495 1268,492 1280,555 1268,558'],
  [PUR, '1249,472 1264,468 1266,492 1256,495 1258,558 1249,560'],
  [PUR, '1215,497 1221,495 1223,565 1215,566'],
  /* right back */
  [WD, '1404,245 1465,510 1452,515 1404,520'],
  [PUR, '1386,220 1418,213 1422,240 1404,243 1404,520 1390,523'],
  [WT, '1404,245 1420,240 1480,505 1465,510'],
  [PUR, '885,310 915,303 920,330 906,333 906,605 888,610'],
  /* light wall */
  ['#c4c4c4', '988,618 1458,540 1458,812 988,895'],
  ['#d6d6d6', '985,603 1455,522 1458,540 988,618'],
  ['#555555', '1183,618 1238,607 1238,653 1185,661'],
  ['#000000', '1188,620 1228,612 1228,638 1188,645'],
  ['#8a8a8a', '1187,645 1234,637 1234,650 1187,658'],
  [PUR, '1452,510 1483,503 1488,530 1470,535 1470,810 1458,812 1458,522'],
  [PUR, '952,600 983,592 988,618 988,893 957,899 952,880'],
  /* right wall 2 */
  [WD, '1470,535 1530,790 1518,800 1518,1030 1470,810'],
  [WT, '1470,535 1488,530 1548,790 1530,795'],
  [WD, '1536,822 1568,930 1568,1040 1536,1090'],
  [PUR, '1516,797 1548,790 1553,818 1536,822 1536,1095 1522,1097 1516,1030'],
  [WT, '1536,820 1553,815 1568,880 1568,950'],
  /* free columns */
  [PUR, '1015,885 1048,878 1053,908 1053,1182 1020,1186'],
  [PUR, '6,1065 37,1058 42,1085 42,1362 10,1368'],
  [PUR, '70,1355 102,1347 107,1375 107,1568 74,1568'],
  /* front wall */
  [W, '606,1283 1087,1197 1088,1476 606,1560'],
  [WT, '605,1270 1085,1185 1087,1197 606,1283'],
  [W, '1120,1192 1568,1112 1568,1392 1120,1468'],
  [WT, '1118,1178 1568,1098 1568,1112 1120,1192'],
  [PUR, '1082,1172 1115,1166 1120,1192 1120,1468 1088,1476'],
  [PUR, '568,1265 600,1258 606,1283 606,1560 578,1568 570,1560'],
];

const hexes: [number, number, string][] = [[329, 412, 'B'], [24, 752, '1'], [24, 1048, '2'], [840, 318, 'C'], [1337, 232, 'D'], [65, 1545, 'A'], [1120, 1540, 'C']];

const CanvasArt = () => (
  <CanvasSvg viewBox="0 0 1023 844" preserveAspectRatio="none">
    {hexes.map(([x, y, t], i) => {
      const cx = x / 1.5267 - 4;
      const cy = y / 1.851 - 3;
      return (
        <g key={i}>
          <circle cx={cx} cy={cy} r={11.5} stroke={GRN} strokeWidth={1.2} fill="#000" strokeDasharray="6 1" />
          <text x={cx} y={cy + 6} fontSize="17" fontFamily="Liberation Sans, sans-serif" fill="#fff" textAnchor="middle">{t}</text>
        </g>
      );
    })}
    {lines.map(([c, p], i) => <polyline key={i} points={pts(p)} stroke={c} strokeWidth={1} fill="none" />)}
    {polys.map(([c, p], i) => <polygon key={i} points={pts(p)} fill={c} />)}
    <text x={70.5} y={329} fontSize="17.5" textAnchor="middle" fontFamily="Liberation Sans, sans-serif" fill="#fff" transform="rotate(-5 70.5 323)">7800</text>
    <text x={898} y={830} fontSize="17.5" textAnchor="middle" fontFamily="Liberation Sans, sans-serif" fill="#ddd" transform="rotate(-5 898 824)">7800</text>
    <g transform="translate(1000 559) rotate(16)">
      <rect width="30" height="28" rx="3" fill="#f2622a" />
      <text x="15" y="24" fontSize="27" fontWeight="700" fontStyle="italic" fontFamily="Liberation Sans, sans-serif" fill="#fff" textAnchor="middle">S</text>
    </g>
    {/* axis gizmo */}
    <g>
      <path d="M50 773l6 8-6 8-6-8z" fill="#0a2ad8" />
      <path d="M50 789v6" stroke="#0a0ad8" strokeWidth="2" />
      <path d="M52 793h14" stroke="#0cd80c" strokeWidth="3" />
      <path d="M65 787l14 5-14 5z" fill="#0cd80c" />
      <path d="M52 797l6 22" stroke="#e00000" strokeWidth="2" />
      <path d="M52 797l6 10-3 12-6-10z" fill="#e81010" />
      <rect x="47" y="791" width="6" height="6" fill="#e8e8e8" />
      <text x="45" y="774" fontSize="14" fontFamily="Liberation Sans, sans-serif" fill="#1a1ae0">Z</text>
      <text x="80" y="794" fontSize="14" fontFamily="Liberation Sans, sans-serif" fill="#18d018">Y</text>
      <text x="54" y="826" fontSize="11" fontFamily="Liberation Sans, sans-serif" fill="#c01010">X</text>
    </g>
  </CanvasSvg>
);

/* ---------- data ---------- */
type PropRow = { n: number; name: string; val?: string; blue?: boolean; check?: 0 | 1 | 2; tree?: boolean; group?: string; edit?: boolean };
const propRows: PropRow[] = [
  { n: 10, name: '混凝土外加剂', val: '(无)', blue: true },
  { n: 11, name: '泵送类型', val: '(混凝土泵)', blue: true },
  { n: 12, name: '泵送高度(m)' },
  { n: 13, name: '内/外墙标志', val: '外墙', check: 2 },
  { n: 14, name: '类别', val: '混凝土墙', blue: true, check: 1 },
  { n: 15, name: '起点顶标高(m)', val: '层顶标高', check: 1 },
  { n: 16, name: '终点顶标高(m)', val: '层顶标高', check: 1 },
  { n: 17, name: '起点底标高(m)', val: '基础底标高', check: 1 },
  { n: 18, name: '终点底标高(m)', val: '基础底标高', check: 1 },
  { n: 19, name: '备注', check: 1 },
  { n: 20, name: '钢筋业务属性', group: '−' },
  { n: 21, name: '其它钢筋', blue: true, tree: true },
  { n: 22, name: '保护层厚...', val: '(15)', tree: true, check: 1 },
  { n: 23, name: '汇总信息', val: '(剪力墙)', tree: true, check: 1 },
  { n: 24, name: '压墙筋', tree: true, check: 1 },
  { n: 25, name: '纵筋构造', val: '设置插筋', tree: true, check: 1 },
  { n: 26, name: '插筋信息', tree: true, check: 1, edit: true },
  { n: 27, name: '水平钢筋...', val: '否', tree: true },
  { n: 28, name: '水平分布...', val: '不计入', tree: true },
  { n: 29, name: '抗震等级', val: '(三级抗震)', tree: true, check: 1 },
  { n: 30, name: '锚固搭接', val: '按默认锚固搭接计算', tree: true },
  { n: 31, name: '计算设置', val: '按默认计算设置计算', tree: true },
  { n: 32, name: '节点设置', val: '按默认节点设置计算', tree: true },
  { n: 33, name: '搭接设置', val: '按默认搭接设置计算', tree: true },
  { n: 34, name: '土建业务属性', group: '+' },
];

type NavEntry = { t: string; icon?: string; on?: boolean; lock?: boolean; dot?: boolean };
const navEntries: NavEntry[] = [
  { t: '施工段', lock: true }, { t: '轴线' }, { t: '柱' }, { t: '墙' },
  { t: '剪力墙(Q)', icon: 'nShear', on: true }, { t: '人防门框墙(RF)', icon: 'nDefense' }, { t: '砌体墙(Q)', icon: 'nBrick' },
  { t: '砌体加筋(Y)', icon: 'nRebar' }, { t: '保温墙(Q)', icon: 'nInsul' }, { t: '暗梁(A)', icon: 'nBeam' },
  { t: '墙垛(E)', icon: 'nPier' }, { t: '幕墙(Q)', icon: 'nCurtain' },
  { t: '门窗洞' }, { t: '梁' }, { t: '板' }, { t: '装配式', lock: true }, { t: '空心楼盖' }, { t: '楼梯', dot: true }, { t: '装修' },
  { t: '房间(F)', icon: 'nRoom' }, { t: '楼地面(V)', icon: 'nFloor' }, { t: '踢脚(S)', icon: 'nSkirt' }, { t: '墙裙(U)', icon: 'nDado' },
  { t: '墙面(W)', icon: 'nWall' }, { t: '天棚(P)', icon: 'nCeil' }, { t: '吊顶(K)', icon: 'nDrop' }, { t: '独立柱装修', icon: 'nCol' }, { t: '单梁装修', icon: 'nBeamFin' },
];

const quick: [string, number, number?][] = [
  ['b', 8], ['b', 12], ['b', 12], ['b', 12], ['s', 18, 40], ['s', 31, -40], ['b', 25], ['b', 12], ['b', 12], ['b', 12], ['b', 12], ['b', 13], ['b', 12],
];

export default function App() {
  return (
    <Page>
      <Global />
      <Header>
        <LogoBox>
          <IconSvg $s={44} viewBox="0 0 44 44">
            <path d="M15 0h10l-.5 14q0 7-4.5 7t-4.5-7z" fill="#12a0ea" />
            <path d="M20 0v10" stroke="#9adcfa" strokeWidth="1.6" />
            <path d="M43 23l-4 0 4-4z" fill="#777" />
          </IconSvg>
        </LogoBox>
        <HeaderMain>
          <QuickRow>
            {quick.map(([k, ml, rot], i) =>
              k === 'b' ? <QuickIcon key={i} $ml={ml} /> : <QuickSlash key={i} $ml={ml} $rot={rot || 0} />)}
            <TitleText>广联达BIM土建计量平台 GTJ2021 - [C:\\建筑率(2023年4月)(配套用房)参考(配套用房).GTJ]</TitleText>
          </QuickRow>
          <TabBar>
            <Tab $ml={15}>开始</Tab>
            <Tab $ml={27}>工程设置</Tab>
            <Tab $ml={13} $active>建模</Tab>
            <Tab $ml={13}>工程量</Tab>
            <Tab $ml={26}>视图</Tab>
            <Tab $ml={26}>工具</Tab>
            <Tab $ml={26}>云应用</Tab>
            <Tab $ml={26}>造价协作</Tab>
            <Tab $ml={26}>协同建模(限免)</Tab>
            <Tab $ml={27}>IGMS</Tab>
          </TabBar>
        </HeaderMain>
      </Header>
      <HelpTip>遇到问题，搜一搜<HelpBtn>立即尝试</HelpBtn></HelpTip>
      <TopSearch>楼层三维显示图元/轴网有错位</TopSearch>

      <Ribbon>
        <Group $w={233}>
          <GroupBody>
            <BigTool $w={53} $pl={3}>
              <BigIcon><Ic n="pointer" s={28} vb={30} /></BigIcon>
              <BigLabel>选择</BigLabel>
            </BigTool>
            <ToolGrid $cols="99px 80px">
              <T n="pick" label="拾取构件" /><T n="find" label="查找图元" />
              <T n="batch" label="批量选择" /><T n="filter" label="过滤图元" off />
              <T n="attr" label="按属性选择" caret />
            </ToolGrid>
          </GroupBody>
          <GroupLabel $plain>选择</GroupLabel>
        </Group>
        <Group $w={194}>
          <GroupBody $pl={8}>
            <ToolGrid $cols="79px 100px">
              <T n="scale" label="设置比例" off /><T n="floor" label="识别楼层表" off />
              <T n="swap" label="查找替换" off /><T n="cad" label="CAD识别选项" />
              <T n="restore" label="还原CAD" off />
            </ToolGrid>
          </GroupBody>
          <GroupLabel>图纸操作<Caret $ml={0} /></GroupLabel>
        </Group>
        <Group $w={276}>
          <GroupBody $pl={9}>
            <ToolGrid $cols="66px 111px 90px">
              <T n="define" label="定义" /><T n="copyTo" label="复制到其它层" caret /><T n="axis2" label="两点辅轴" caret />
              <T n="cloud" label="云检查" /><T n="flatTop" label="自动平齐顶板" caret /><T n="dim" label="长度标注" caret />
              <T n="lock" label="锁定" caret /><T n="store" label="图元存盘" caret /><T n="convert" label="转换图元" />
            </ToolGrid>
          </GroupBody>
          <GroupLabel>通用操作<Caret $ml={0} /></GroupLabel>
        </Group>
        <Group $w={236}>
          <GroupBody $pl={9}>
            <ToolGrid $cols="53px 55px 62px 57px">
              <T n="del" label="删除" /><T n="rotate" label="旋转" /><T n="trim" label="修剪" /><T n="offset" label="偏移" />
              <T n="copy" label="复制" /><T n="mirror" label="镜像" /><Tool><ToolIcon><Ic n="align" s={15} /></ToolIcon>对齐<Caret /></Tool><T n="merge" label="合并" />
              <T n="move" label="移动" /><T n="extend" label="延伸" /><T n="breakI" label="打断" /><T n="split" label="分割" off />
            </ToolGrid>
          </GroupBody>
          <GroupLabel>修改<Caret $ml={0} /></GroupLabel>
        </Group>
        <Group $w={67}>
          <GroupBody>
            <ToolGrid $cols="32px 32px">
              <DrawCell><Ic n="dot" s={15} /></DrawCell><DrawCell><Ic n="gauge" s={15} /></DrawCell>
              <DrawCell $on><Ic n="line" s={15} /></DrawCell><DrawCell><Ic n="rect" s={15} /></DrawCell>
              <DrawCell><Ic n="arc" s={15} /><Caret $ml={2} /></DrawCell>
            </ToolGrid>
          </GroupBody>
          <GroupLabel $plain>绘图</GroupLabel>
        </Group>
        <Group $w={234}>
          <GroupBody $pl={9}>
            <BigTool $w={76} $off><BigIcon><Ic n="bTable" s={31} vb={32} /></BigIcon><BigLabel>识别剪力墙表</BigLabel></BigTool>
            <BigTool $w={74} $off><BigIcon><Ic n="bWall" s={31} vb={32} /></BigIcon><BigLabel>识别剪力墙</BigLabel></BigTool>
            <BigTool $w={68} $off><BigIcon><Ic n="bCheck" s={31} vb={32} /></BigIcon><BigLabel>校核墙图元</BigLabel></BigTool>
          </GroupBody>
          <GroupLabel $plain>识别剪力墙</GroupLabel>
        </Group>
        <Group $w={79}>
          <GroupBody>
            <BigTool $w={64}>
              <BigIcon><Ic n="bSmart" s={32} vb={33} /></BigIcon>
              <BigLabel>智能布置</BigLabel>
              <Caret $ml={0} />
            </BigTool>
          </GroupBody>
          <GroupLabel $plain>智能布置</GroupLabel>
        </Group>
        <Group $w={180}>
          <GroupBody $pl={8}>
            <ToolGrid $cols="78px 90px">
              <T n="slope" label="查改标高" /><T n="pull" label="墙体拉通" />
              <T n="oblique" label="设置斜墙" /><T n="inout" label="判断内外墙" />
              <T n="archW" label="设置拱墙" />
            </ToolGrid>
          </GroupBody>
          <GroupLabel $plain>剪力墙二次编辑</GroupLabel>
        </Group>
      </Ribbon>

      <OptionBar>
        <Select $w={98.5}>地下一层<Caret $ml={0} $c="#555" /></Select>
        <Select $w={98.5} $ml={3.5}>墙<Caret $ml={0} $c="#555" /></Select>
        <Select $w={98.5} $ml={3.5}>剪力墙<Caret $ml={0} $c="#555" /></Select>
        <Select $w={98.5} $ml={3.5}>DWQ<Caret $ml={0} $c="#555" /></Select>
        <OptCheck />
        <OptText>点加长度</OptText>
        <OptText $ml={4} $w={26} $grey>长度:</OptText>
        <OptInput $w={80} $off>0</OptInput>
        <OptText $ml={2} $w={51} $grey>反向长度:</OptText>
        <OptInput $w={79} $off>0</OptInput>
        <OptSep $ml={5} />
        <OptText $ml={5} $w={64}>左偏心距离:</OptText>
        <OptInput $w={78}>150</OptInput>
        <OptSep $ml={6} />
        <Select $w={57} $ml={4}>不偏移<Caret $ml={0} $c="#555" /></Select>
        <OptText $ml={4} $w={18} $grey>X=</OptText>
        <OptInput $w={60}><SpinValue>0</SpinValue><Spin><i /><i /></Spin></OptInput>
        <OptText $ml={2} $w={40} $grey>mm Y=</OptText>
        <OptInput $w={60}><SpinValue>0</SpinValue><Spin><i /><i /></Spin></OptInput>
        <OptText $ml={2} $grey>mm</OptText>
      </OptionBar>

      <Main>
        <NavPanel>
          <PanelClose />
          <NavTitle>导航栏</NavTitle>
          <NavTools>
            <NavToolBtn $ml={0}><Ic n="sparkle" s={11} vb={14} /></NavToolBtn>
            <NavToolBtn $ml={9} $on><Ic n="listI" s={16} /></NavToolBtn>
            <NavToolBtn $ml={4} $on><Ic n="docI" s={15} /></NavToolBtn>
          </NavTools>
          <NavList>
            {navEntries.map((e, i) =>
              e.icon ? (
                <NavItem key={i} $on={e.on}><Ic n={e.icon} s={18} vb={18} />{e.t}</NavItem>
              ) : (
                <NavHead key={i}>
                  {e.t}
                  {e.lock && <Ic n="padlock" s={11} />}
                  {e.lock && <FreeBadge>免费试用</FreeBadge>}
                  {e.dot && <RedDot />}
                </NavHead>
              ))}
          </NavList>
          <NavScroll />
        </NavPanel>

        <MidCol>
          <Panel $h={267}>
            <PanelClose />
            <TabRow><PanelTab $on>构件列表</PanelTab><PanelTab>图纸管理</PanelTab></TabRow>
            <CompBar>
              <CompTool $w={67}><Ic n="newI" s={15} />新建<Caret $ml={3} /></CompTool>
              <CompTool $w={57}><Ic n="copy" s={15} />复制</CompTool>
              <CompTool $w={55}><Ic n="del" s={15} />删除</CompTool>
              <CompTool $w={80}><Ic n="layerCopy" s={15} />层间复制</CompTool>
              <MoreBtn>▸▸</MoreBtn>
            </CompBar>
            <SearchRow>搜索构件...<Ic n="search" s={12} /></SearchRow>
            <Tree>
              <TreeHead><Ic n="tri" s={8} />剪力墙</TreeHead>
              <TreeLeaf $on>{'DWQ  <4>  [外墙]'}</TreeLeaf>
              <TreeLeaf>{'SCQ  <2>  [外墙]'}</TreeLeaf>
            </Tree>
          </Panel>
          <Panel>
            <PanelClose />
            <TabRow><PanelTab $on>属性列表</PanelTab><PanelTab>图层管理</PanelTab></TabRow>
            <HeadRow>
              <HeadCell />
              <HeadCell>属性名称</HeadCell>
              <HeadCell $on>属性值</HeadCell>
              <HeadCell>附加</HeadCell>
            </HeadRow>
            {propRows.map(r => (
              <Row key={r.n}>
                <NumCell $on={r.edit}>{r.n}</NumCell>
                <NameCell $blue={r.blue} $tree={r.tree} $end={r.n === 33} $group={!!r.group}>
                  {r.group && <TreeBox>{r.group}</TreeBox>}
                  {r.name}
                </NameCell>
                <ValCell>
                  {r.val}
                  {r.edit && <EditBox><EditBtn>···</EditBtn></EditBox>}
                  {r.edit && <RedFrame />}
                </ValCell>
                <AddCell>
                  {r.check === 1 && <Check />}
                  {r.check === 2 && <Check $on><Ic n="tick" s={10} /></Check>}
                </AddCell>
              </Row>
            ))}
            <PropScroll />
          </Panel>
        </MidCol>

        <Splitter />
        <Canvas>
          <CanvasArt />
          <StatusBar><Ic n="shrink" s={15} />当插筋信息与纵筋不同时在此输入,格式：级别 ＋ 直径,如 C14</StatusBar>
          <HintTip>点击图标可调节提示信息位置~<HintDim>不再提示</HintDim></HintTip>
        </Canvas>
      </Main>
    </Page>
  );
}
